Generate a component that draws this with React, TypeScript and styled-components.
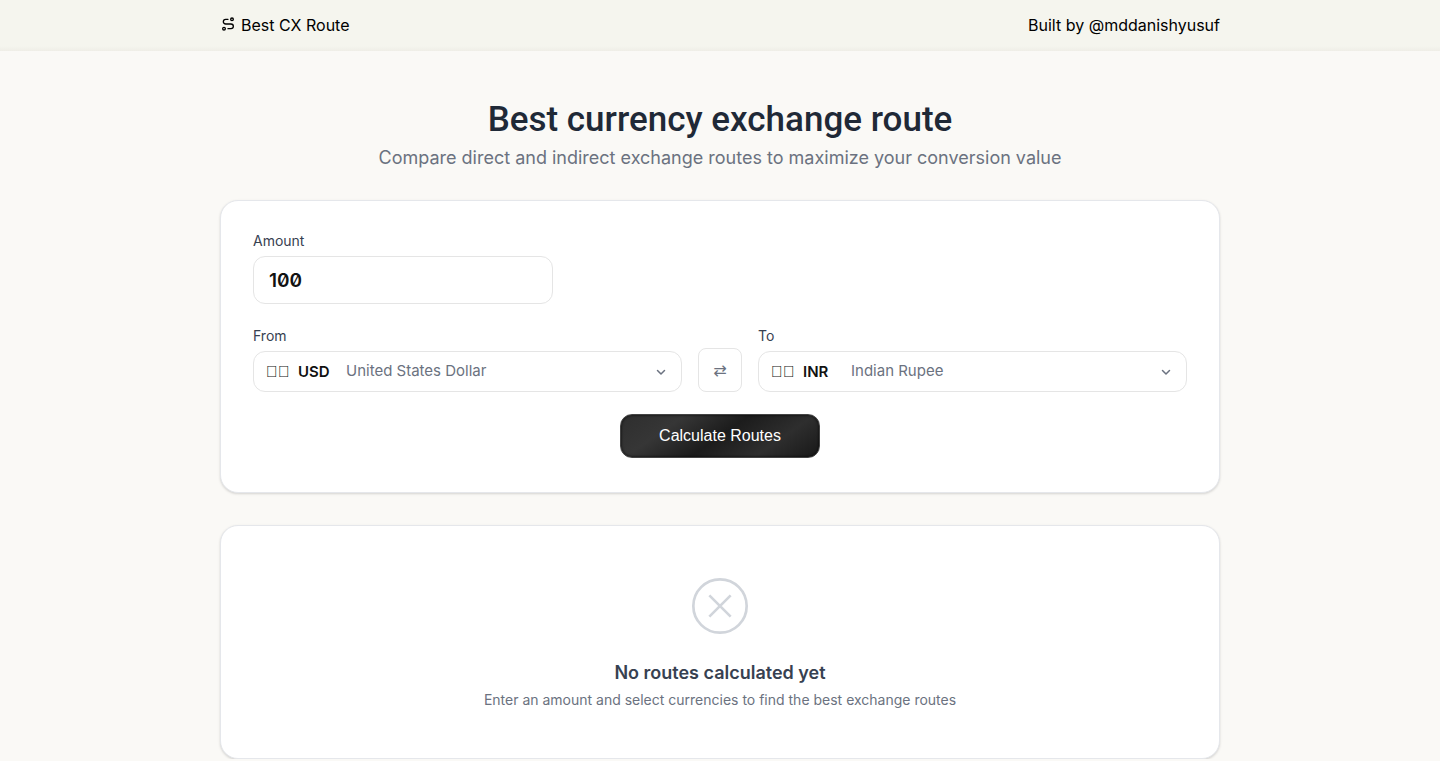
import React, { useId, useState } from "react";
import styled, { createGlobalStyle } from "styled-components";

const sans = `"Inter", "Liberation Sans", sans-serif`;

const GlobalStyle = createGlobalStyle`
  *, *::before, *::after { box-sizing: border-box; }
  body {
    margin: 0;
    background: #faf9f6;
    color: #111111;
    font-family: ${sans};
    font-size: 16px;
    line-height: 24px;
  }
`;

const Header = styled.header`
  padding: 13px 20px 14px;
  background: linear-gradient(#f5f5ee 90%, #efeee7);
`;

const HeaderInner = styled.div`
  display: flex;
  align-items: center;
  justify-content: space-between;
  max-width: 1000px;
  margin: 0 auto;
`;

const HeaderLink = styled.a`
  display: flex;
  align-items: center;
  gap: 5px;
  color: #000000;
  text-decoration: none;

  svg { margin-bottom: 2px; }
`;

const Main = styled.main`
  display: flex;
  flex-direction: column;
  gap: 32px;
  max-width: 1000px;
  margin: 0 auto;
  padding-top: 48px;
`;

const Hero = styled.section`
  text-align: center;
`;

const Title = styled.h1`
  margin: 0;
  color: #1f2937;
  font-family: "Roboto", sans-serif;
  font-size: 35px;
  font-weight: 500;
  line-height: 42px;
`;

const Subtitle = styled.p`
  margin: 7px 0 0;
  color: #6b7280;
  font-size: 18px;
  line-height: 20px;
`;

const Card = styled.section`
  padding: 32px;
  border: 1px solid #e5e7eb;
  border-radius: 18px;
  background: #ffffff;
  box-shadow: 0 1px 3px rgba(0, 0, 0, 0.1), 0 1px 2px rgba(0, 0, 0, 0.06);
`;

const Form = styled.form`
  display: flex;
  flex-direction: column;
  gap: 24px;
`;

const Field = styled.div`
  display: flex;
  flex-direction: column;
  gap: 8px;
  min-width: 0;
`;

const Label = styled.label`
  color: #374151;
  font-size: 14px;
  line-height: 15px;
`;

const AmountInput = styled.input`
  width: 300px;
  max-width: 100%;
  height: 48px;
  padding: 0 15px;
  border: 1px solid #e5e5e5;
  border-radius: 12px;
  background: #ffffff;
  color: #111111;
  font: 600 19px ${sans};
  font-feature-settings: "zero" 1;
`;

const CurrencyRow = styled.div`
  display: grid;
  grid-template-columns: 1fr 44px 1fr;
  align-items: end;
  gap: 16px;
`;

const Picker = styled.div`
  display: grid;
  height: 41px;
  border: 1px solid #e5e5e5;
  border-radius: 12px;
  background: #ffffff;

  > * { grid-area: 1 / 1; }
`;

const PickerFace = styled.div`
  display: flex;
  align-items: center;
  gap: 8px;
  padding: 0 12px;
`;

const NativeSelect = styled.select`
  width: 100%;
  height: 100%;
  opacity: 0;
  cursor: pointer;
`;

const Flag = styled.span`
  min-width: 24px;
  color: #111111;
  font-family: "Liberation Sans", sans-serif;
  font-size: 16px;
`;

const Code = styled.span`
  min-width: 40px;
  font-size: 15px;
  font-weight: 600;
`;

const CurrencyName = styled.span`
  flex: 1;
  padding-bottom: 2px;
  color: #6b7280;
  font-size: 15px;
`;

const SwapButton = styled.button`
  width: 44px;
  height: 44px;
  padding: 0;
  border: 1px solid #e5e5e5;
  border-radius: 8px;
  background: #ffffff;
  color: #6b7280;
  font: 16px "DejaVu Sans", sans-serif;
`;

const SubmitButton = styled.button`
  align-self: center;
  width: 200px;
  height: 44px;
  border: 1px solid #444444;
  border-radius: 12px;
  background: linear-gradient(145deg, #2e2e2e 0%, #363636 25%, #1c1c1c 50%, #2e2e2e 75%, #181818 100%);
  box-shadow: inset 0 0 2px 1px rgba(0, 0, 0, 0.4);
  color: #ffffff;
  font: 16px "Liberation Sans", Arial, sans-serif;
`;

const FormCard = styled(Card)`
  padding-bottom: 34px;

  ${SubmitButton} { margin-top: -2px; }
`;

const EmptyCard = styled(Card)`
  display: flex;
  flex-direction: column;
  align-items: center;
  padding: 48px 32px;
  text-align: center;
`;

const EmptyTitle = styled.h2`
  margin: 23px 0 0;
  color: #374151;
  font-size: 18px;
  font-weight: 600;
  line-height: 24px;
`;

const EmptyText = styled.p`
  margin: 5px 0 0;
  color: #6b7280;
  font-size: 14px;
  line-height: 20px;
`;

// Each flag is a pair of private-use characters, drawn as plain boxes.
const currencies = [
  { code: "USD", flag: "\uE000\uE001", name: "United States Dollar" },
  { code: "INR", flag: "\uE000\uE001", name: "Indian Rupee" },
];

const RouteIcon = () => (
  <svg width="16" height="16" viewBox="0 0 24 24" fill="none" stroke="currentColor" strokeWidth="2" strokeLinecap="round" strokeLinejoin="round" aria-hidden="true">
    <circle cx="6" cy="19" r="2" />
    <circle cx="18" cy="5" r="2" />
    <path d="M12 19h4.500a3.500 3.500 0 0 0 0-7h-8a3.500 3.500 0 0 1 0-7H12" />
  </svg>
);

const Chevron = () => (
  <svg width="16" height="16" viewBox="0 0 16 16" fill="none" stroke="#6b7280" strokeWidth="1.5" strokeLinecap="round" strokeLinejoin="round" aria-hidden="true">
    <path d="m4.500 6.500 3.500 3.500 3.500-3.500" />
  </svg>
);

const EmptyIcon = () => (
  <svg width="64" height="64" viewBox="0 0 24 24" fill="none" stroke="#d1d5db" aria-hidden="true">
    <circle cx="12" cy="12" r="10" />
    <path d="m8 8 8 8M16 8l-8 8" />
  </svg>
);

type SelectProps = { label: string; value: string; onChange: (code: string) => void };

function CurrencySelect({ label, value, onChange }: SelectProps) {
  const id = useId();
  const current = currencies.find((c) => c.code === value) ?? currencies[0];
  return (
    <Field>
      <Label htmlFor={id}>{label}</Label>
      <Picker>
        <PickerFace aria-hidden="true">
          <Flag>{current.flag}</Flag>
          <Code>{current.code}</Code>
          <CurrencyName>{current.name}</CurrencyName>
          <Chevron />
        </PickerFace>
        <NativeSelect id={id} value={value} onChange={(e) => onChange(e.target.value)}>
          {currencies.map((c) => (
            <option key={c.code} value={c.code}>{c.name}</option>
          ))}
        </NativeSelect>
      </Picker>
    </Field>
  );
}

export default function App() {
  const [amount, setAmount] = useState("100");
  const [from, setFrom] = useState("USD");
  const [to, setTo] = useState("INR");

  const swap = () => {
    setFrom(to);
    setTo(from);
  };

  return (
    <>
      <GlobalStyle />
      <Header>
        <HeaderInner>
          <HeaderLink href="/"><RouteIcon />Best CX Route</HeaderLink>
          <HeaderLink href="#author">Built by @mddanishyusuf</HeaderLink>
        </HeaderInner>
      </Header>
      <Main>
        <Hero>
          <Title>Best currency exchange route</Title>
          <Subtitle>Compare direct and indirect exchange routes to maximize your conversion value</Subtitle>
        </Hero>
        <FormCard>
          <Form onSubmit={(e) => e.preventDefault()}>
            <Field>
              <Label htmlFor="amount">Amount</Label>
              <AmountInput id="amount" inputMode="decimal" value={amount} onChange={(e) => setAmount(e.target.value)} />
            </Field>
            <CurrencyRow>
              <CurrencySelect label="From" value={from} onChange={setFrom} />
              <SwapButton type="button" aria-label="Swap currencies" onClick={swap}>⇄</SwapButton>
              <CurrencySelect label="To" value={to} onChange={setTo} />
            </CurrencyRow>
            <SubmitButton type="submit">Calculate Routes</SubmitButton>
          </Form>
        </FormCard>
        <EmptyCard>
          <EmptyIcon />
          <EmptyTitle>No routes calculated yet</EmptyTitle>
          <EmptyText>Enter an amount and select currencies to find the best exchange routes</EmptyText>
        </EmptyCard>
      </Main>
    </>
  );
}
